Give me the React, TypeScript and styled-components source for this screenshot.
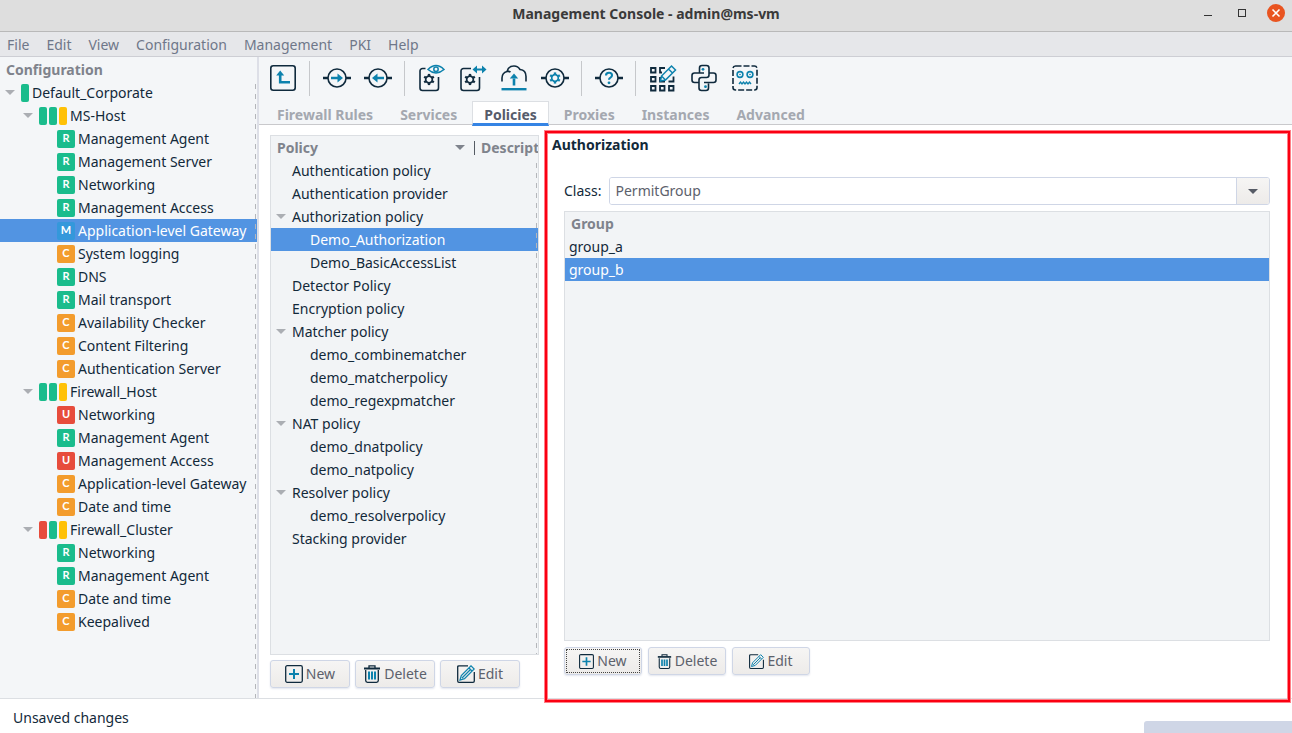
import React from 'react';
import styled, { createGlobalStyle } from 'styled-components';

const ink = '#0f2a3d';
const teal = '#0d82ad';

const GlobalStyle = createGlobalStyle`
  * { box-sizing: border-box; }
  body {
    margin: 0;
    background: #fff;
    color: #12293a;
    font-family: 'Noto Sans', 'Liberation Sans', sans-serif;
    font-size: 14px;
    line-height: 20px;
  }
  button, input { font: inherit; color: inherit; }
  ul { list-style: none; margin: 0; padding: 0; }
  h1, h2 { margin: 0; font-size: 14px; font-weight: 700; }
`;

const Window = styled.div`
  display: flex;
  flex-direction: column;
  min-height: 100vh;
`;

const TitleBar = styled.header`
  display: grid;
  grid-template-columns: 1fr auto 1fr;
  align-items: center;
  height: 32px;
  padding: 0 6px 4px;
  background: #dedede;
  border-bottom: 1px solid #b9b9b9;
  color: #3a3a3a;
`;

const WindowControls = styled.div`
  grid-column: 3;
  display: flex;
  justify-content: flex-end;
  gap: 14px;
`;

const WindowButton = styled.button`
  width: 20px;
  height: 20px;
  padding: 0;
  border: 0;
  background: none;
  svg { display: block; }
`;

const Title = styled.h1`
  grid-column: 2;
`;

const MenuBar = styled.nav`
  display: flex;
  align-items: center;
  gap: 17px;
  height: 25px;
  padding: 2px 7px 0;
  background: #e6e7ea;
  border-bottom: 1px solid #cdced4;
`;

const MenuItem = styled.button`
  padding: 0;
  border: 0;
  background: none;
  color: #6f7789;
`;

const Body = styled.div`
  flex: 1;
  display: flex;
`;

const Sidebar = styled.aside`
  flex: none;
  width: 259px;
  position: relative;
  background: #f4f6f8;
  border-right: 2px solid #dddfe7;
`;

const DashedEdge = styled.span`
  position: absolute;
  top: 27px;
  right: 1px;
  bottom: 0;
  width: 1px;
  background: repeating-linear-gradient(#b4b6ba 0 5px, transparent 5px 10px);
`;

const PaneHeader = styled.h2`
  height: 24px;
  padding: 3px 6px;
  color: #7f838c;
`;

const TreeRow = styled.li<{ $level: number; $selected?: boolean }>`
  display: flex;
  align-items: center;
  gap: 3px;
  height: 23px;
  padding-left: ${p => 5 + p.$level * 18}px;
  white-space: nowrap;
  background: ${p => (p.$selected ? '#5294e2' : 'transparent')};
  color: ${p => (p.$selected ? '#fff' : 'inherit')};
`;

const Twisty = styled.span<{ $open?: boolean }>`
  flex: none;
  width: 10px;
  margin-right: 3px;
  border: 5px solid transparent;
  border-bottom: 0;
  border-top-color: ${p => (p.$open ? '#abaeb3' : 'transparent')};
`;

const Bars = styled.span`
  display: flex;
  gap: 2px;
`;

const Bar = styled.span<{ $color: string }>`
  width: 8px;
  height: 18px;
  border-radius: 2px;
  background: ${p => p.$color};
`;

const Badge = styled.span<{ $color: string }>`
  width: 18px;
  height: 18px;
  border-radius: 2px;
  background: ${p => p.$color};
  color: #fff;
  font: 700 11px/16px Lato, sans-serif;
  text-align: center;
`;

const Main = styled.main`
  flex: 1;
  min-width: 0;
  display: flex;
  flex-direction: column;
`;

const Toolbar = styled.div`
  display: flex;
  align-items: center;
  height: 44px;
  padding: 0 3px 2px;
  background: #f4f6f8;
`;

const ToolButton = styled.button`
  display: grid;
  place-items: center;
  width: 41px;
  height: 36px;
  padding: 0;
  border: 0;
  background: none;
`;

const Separator = styled.span`
  width: 1px;
  height: 35px;
  margin: 0 6px;
  background: #c6c8cb;
`;

const Tabs = styled.div`
  display: flex;
  gap: 3px;
  height: 24px;
  padding-left: 6px;
  background: #f4f6f8;
  box-shadow: inset 0 -1px #c9c9cc;
`;

const Tab = styled.button<{ $active?: boolean }>`
  height: 25px;
  padding: ${p => (p.$active ? '3px' : '1px')} 11px 0;
  border: 1px solid ${p => (p.$active ? '#dcdfe3' : 'transparent')};
  border-bottom: ${p => (p.$active ? '3px solid #3584e4' : '0')};
  background: ${p => (p.$active ? '#fff' : 'none')};
  color: ${p => (p.$active ? '#565c6b' : '#a4a8b0')};
  font-weight: 700;
`;

const Content = styled.div`
  flex: 1;
  display: flex;
  padding-top: 1px;
`;

const PolicyPane = styled.section`
  flex: none;
  width: 285px;
  display: flex;
  flex-direction: column;
  gap: 5px;
  padding: 9px 5px 10px 11px;
`;

const ListBox = styled.div`
  flex: 1;
  position: relative;
  background: #f2f4f6;
  border: 1px solid #dcdfe3;
`;

const ColumnHeader = styled.div`
  display: flex;
  align-items: center;
  height: 23px;
  padding-left: 6px;
  overflow: hidden;
  color: #7f838c;
  font-weight: 700;
`;

const SortColumn = styled.span`
  flex: none;
  display: flex;
  align-items: center;
  justify-content: space-between;
  width: 198px;
  height: 14px;
  padding-right: 9px;
  margin-right: 6px;
  border-right: 1px solid #555b63;
`;

const SortArrow = styled.span`
  border: 5px solid transparent;
  border-bottom: 0;
  border-top-color: #7f838c;
`;

const ButtonRow = styled.div<{ $gap: number }>`
  display: flex;
  gap: ${p => p.$gap}px;
`;

const ActionButton = styled.button<{ $width: number; $focused?: boolean }>`
  display: flex;
  align-items: center;
  justify-content: center;
  gap: 3px;
  width: ${p => p.$width}px;
  height: 28px;
  padding: 0;
  border: 1px solid #cfd6e6;
  border-radius: 3px;
  background: linear-gradient(#f6f5f4, #edebe9);
  box-shadow: 0 1px 2px #e3e6ee;
  color: #5c616c;
  outline: ${p => (p.$focused ? '1px dotted #444' : 'none')};
  outline-offset: -3px;
`;

const DetailPane = styled.section`
  flex: 1;
  min-width: 0;
  position: relative;
  display: flex;
  flex-direction: column;
  padding: 9px 22px 23px 20px;
  &::after {
    content: '';
    position: absolute;
    inset: 5px 2px -4px 1px;
    border: 2px solid #fb0012;
    box-shadow: 0 0 0 1px #ff8088, inset 0 0 0 1px #ff8088;
    pointer-events: none;
  }
`;

const DetailTitle = styled.h2`
  margin: 0 0 22px -12px;
`;

const ClassRow = styled.div`
  display: flex;
  align-items: center;
  gap: 8px;
  margin-bottom: 6px;
`;

const Combo = styled.div`
  flex: 1;
  display: flex;
  height: 28px;
  border: 1px solid #cfd6e6;
  border-radius: 3px;
  overflow: hidden;
`;

const ComboInput = styled.input`
  flex: 1;
  min-width: 0;
  padding: 0 5px;
  border: 0;
  background: #fff;
  color: #5c616c;
`;

const ComboButton = styled.button`
  display: grid;
  place-items: center;
  width: 33px;
  padding: 0;
  border: 0;
  border-left: 1px solid #cfd6e6;
  background: linear-gradient(#f6f5f4, #edebe9);
`;

const ComboArrow = styled(SortArrow)`
  border-top-color: #565b66;
`;

const GroupList = styled(ListBox)`
  margin-bottom: 6px;
`;

const GroupRow = styled.li<{ $selected?: boolean }>`
  height: 23px;
  padding: 2px 4px 0;
  background: ${p => (p.$selected ? '#5294e2' : 'transparent')};
  color: ${p => (p.$selected ? '#fff' : 'inherit')};
`;

const StatusBar = styled.footer`
  display: flex;
  justify-content: space-between;
  height: 35px;
  padding: 9px 0 0 13px;
  border-top: 1px solid #dcdfe3;
`;

const Progress = styled.div`
  align-self: flex-end;
  width: 148px;
  height: 12px;
  border-top-left-radius: 3px;
  background: #cfd6e6;
`;

function Icon({ children }: { children: React.ReactNode }) {
  return (
    <svg width="28" height="28" viewBox="0 0 28 28" fill="none" stroke={ink} strokeWidth="1.6" aria-hidden="true">
      {children}
    </svg>
  );
}

const Gear = ({ x, y, color }: { x: number; y: number; color: string }) => (
  <g transform={`translate(${x} ${y})`} stroke={color}>
    <circle r="3.3" strokeWidth="1.7" />
    {[0, 60, 120, 180, 240, 300].map(a => (
      <path key={a} d="M0-3.600V-5.600" strokeWidth="2.400" transform={`rotate(${a})`} />
    ))}
  </g>
);

const Node = ({ children }: { children: React.ReactNode }) => (
  <Icon>
    <circle cx="14" cy="14" r="9" />
    <path d="M0 14h5M23 14h5" strokeWidth="2.6" />
    {children}
  </Icon>
);

const tools: Array<null | { name: string; icon: React.ReactNode }> = [
  {
    name: 'Up',
    icon: (
      <Icon>
        <rect x="1.8" y="1.8" width="24.4" height="24.4" rx="2.500" />
        <path d="M21 18.200H11.200V10" stroke={teal} strokeWidth="2.600" />
        <path d="M11.200 6.500l4 5H7.200z" fill={teal} stroke="none" />
      </Icon>
    ),
  },
  null,
  {
    name: 'Forward',
    icon: (
      <Node>
        <path d="M8 14h8" stroke={teal} strokeWidth="2.500" />
        <path d="M20 14l-5.500-4.400v8.800z" fill={teal} stroke="none" />
      </Node>
    ),
  },
  {
    name: 'Back',
    icon: (
      <Node>
        <path d="M20 14h-8" stroke={teal} strokeWidth="2.500" />
        <path d="M8 14l5.500-4.400v8.800z" fill={teal} stroke="none" />
      </Node>
    ),
  },
  null,
  {
    name: 'View configuration',
    icon: (
      <Icon>
        <path d="M7.500 4.500H4.500A2.500 2.500 0 0 0 2 7v17A2.500 2.500 0 0 0 4.500 26.500H18A2.500 2.500 0 0 0 20.500 24V13" />
        <Gear x={11} y={15.5} color={ink} />
        <path d="M10 5.500q8-8 16 0q-8 7-16 0z" stroke={teal} strokeWidth="1.500" />
        <circle cx="18" cy="5.300" r="2.200" stroke={teal} strokeWidth="1.500" />
      </Icon>
    ),
  },
  {
    name: 'Compare configuration',
    icon: (
      <Icon>
        <path d="M12 4.500H4.500A2.500 2.500 0 0 0 2 7v17A2.500 2.500 0 0 0 4.500 26.500H18A2.500 2.500 0 0 0 20.500 24V13" />
        <Gear x={11} y={15.5} color={ink} />
        <path d="M16 5.500h9" stroke={teal} strokeWidth="2" />
        <path d="M13.500 5.500l4.500-4v8zM27.500 5.500l-4.500-4v8z" fill={teal} stroke="none" />
      </Icon>
    ),
  },
  {
    name: 'Upload configuration',
    icon: (
      <Icon>
        <path d="M2 17.500V14q0-5 5-6.500q1.500-5.500 7-5.500q4 0 6 3.500q6 .5 6 7V17.500M7 7.500q2-.500 3.500.500" />
        <path d="M14 21.500v-7" stroke={teal} strokeWidth="2.600" />
        <path d="M14 9.500l4.200 5H9.800z" fill={teal} stroke="none" />
        <path d="M1.500 25.200h25" stroke={teal} strokeWidth="2.400" />
      </Icon>
    ),
  },
  { name: 'Control service', icon: <Node><Gear x={14} y={14} color={teal} /></Node> },
  null,
  {
    name: 'Check',
    icon: (
      <Node>
        <path d="M11 11.500q0-2.700 3-2.700t3 2.500q0 1.500-1.500 2.300T14 15.800" stroke={teal} strokeWidth="2.100" />
        <circle cx="14" cy="18.800" r="1.400" fill={teal} stroke="none" />
      </Node>
    ),
  },
  null,
  {
    name: 'Edit grid',
    icon: (
      <Icon>
        <path
          strokeWidth="1.800"
          d="M2 4h4.500v4.500H2zM2 13h4.500v4.500H2zM2 22h4.500v4.500H2zM11 22h4.500v4.500H11zM20 22h4.500v4.500H20zM16 4h-5v4.500h2M11 13v4.500h5M19.500 17.500h5V12.500"
        />
        <path
          d="M11.500 17l1-5L22.500 2l4 4L16.500 16zM19.500 5l4 4M12.500 12l4 4"
          fill="#f4f6f8"
          stroke={teal}
          strokeWidth="1.500"
        />
      </Icon>
    ),
  },
  {
    name: 'Python',
    icon: (
      <Icon>
        <path d="M9.500 8.500V4q0-2.500 2.500-2.500h4.500Q19 1.500 19 4v7q0 2.500-2.500 2.500h-5Q9 13.500 9 16v2.500H4.500Q2 18.500 2 16v-4.500Q2 9 4.500 9H14M18.500 19.500V24q0 2.500-2.500 2.500h-4.500Q9 26.500 9 24v-5.500M19 9h4.500Q26 9 26 11.500V16q0 2.500-2.500 2.500H14" />
        <circle cx="13" cy="5.300" r="1.400" fill={teal} stroke="none" />
        <circle cx="15.500" cy="22.700" r="1.400" fill={teal} stroke="none" />
      </Icon>
    ),
  },
  {
    name: 'Script preview',
    icon: (
      <Icon>
        <rect x="2" y="2" width="24" height="24" rx="2.500" strokeDasharray="6 2" />
        <g stroke={teal}>
          <circle cx="9" cy="10.500" r="2.900" />
          <circle cx="19" cy="10.500" r="2.900" />
          <path d="M8 20l1.500-2 1.500 2 1.500-2 1.500 2 1.500-2 1.500 2 1.500-2 1.500 2" strokeWidth="1.300" />
        </g>
        <circle cx="9" cy="10.500" r=".8" fill={teal} stroke="none" />
        <circle cx="19" cy="10.500" r=".8" fill={teal} stroke="none" />
      </Icon>
    ),
  },
];

const colors = { g: '#1abc8c', y: '#ffc107', r: '#e74c3c' };
const badgeColors: Record<string, string> = { R: '#1abc8c', U: '#e74c3c', C: '#f39c2d', M: '#3498db' };

type Host = { name: string; bars: Array<keyof typeof colors>; items: string[][] };

const hosts: Host[] = [
  {
    name: 'MS-Host',
    bars: ['g', 'g', 'y'],
    items: [
      ['R', 'Management Agent'],
      ['R', 'Management Server'],
      ['R', 'Networking'],
      ['R', 'Management Access'],
      ['M', 'Application-level Gateway'],
      ['C', 'System logging'],
      ['R', 'DNS'],
      ['R', 'Mail transport'],
      ['C', 'Availability Checker'],
      ['C', 'Content Filtering'],
      ['C', 'Authentication Server'],
    ],
  },
  {
    name: 'Firewall_Host',
    bars: ['g', 'g', 'y'],
    items: [
      ['U', 'Networking'],
      ['R', 'Management Agent'],
      ['U', 'Management Access'],
      ['C', 'Application-level Gateway'],
      ['C', 'Date and time'],
    ],
  },
  {
    name: 'Firewall_Cluster',
    bars: ['r', 'g', 'y'],
    items: [
      ['R', 'Networking'],
      ['R', 'Management Agent'],
      ['C', 'Date and time'],
      ['C', 'Keepalived'],
    ],
  },
];

const policies: Array<{ name: string; items?: string[] }> = [
  { name: 'Authentication policy' },
  { name: 'Authentication provider' },
  { name: 'Authorization policy', items: ['Demo_Authorization', 'Demo_BasicAccessList'] },
  { name: 'Detector Policy' },
  { name: 'Encryption policy' },
  { name: 'Matcher policy', items: ['demo_combinematcher', 'demo_matcherpolicy', 'demo_regexpmatcher'] },
  { name: 'NAT policy', items: ['demo_dnatpolicy', 'demo_natpolicy'] },
  { name: 'Resolver policy', items: ['demo_resolverpolicy'] },
  { name: 'Stacking provider' },
];

function Actions({ width, gap, iconSize, focused }: { width: number; gap: number; iconSize: number; focused?: boolean }) {
  const svg = { width: iconSize, height: iconSize, viewBox: '0 0 18 18', fill: 'none', stroke: ink, strokeWidth: 1.3 };
  return (
    <ButtonRow $gap={gap}>
      <ActionButton $width={width} $focused={focused}>
        <svg {...svg}>
          <rect x=".7" y=".7" width="16.600" height="16.600" rx="1.500" />
          <path d="M9 4v10M4 9h10" stroke={teal} strokeWidth="2" />
        </svg>
        New
      </ActionButton>
      <ActionButton $width={width}>
        <svg {...svg}>
          <path d="M6 3V.8h6V3M2.700 5v10.500q0 1.800 1.800 1.800h9q1.800 0 1.800-1.800V5" />
          <path d="M1 3.500h16" strokeWidth="2" />
          <path d="M6 6.500v8M9 6.500v8M12 6.500v8" stroke={teal} strokeWidth="2" />
        </svg>
        Delete
      </ActionButton>
      <ActionButton $width={width}>
        <svg {...svg}>
          <path d="M11 .8H2Q.7.800.7 2v14q0 1.300 1.300 1.300h14q1.300 0 1.300-1.300V7" />
          <path d="M3 15l1.300-4.500L14 .8 17.200 4 7.500 13.700zM12 3l3 3M5 13L13.500 4.500" stroke={teal} strokeWidth="1.200" />
        </svg>
        Edit
      </ActionButton>
    </ButtonRow>
  );
}

export default function App() {
  return (
    <Window>
      <GlobalStyle />
      <TitleBar>
        <Title>Management Console - admin@ms-vm</Title>
        <WindowControls>
          <WindowButton aria-label="Minimize">
            <svg width="20" height="20"><path d="M6 11.500h8" stroke="#333" /></svg>
          </WindowButton>
          <WindowButton aria-label="Maximize">
            <svg width="20" height="20"><rect x="6.500" y="5.500" width="7" height="7" fill="none" stroke="#333" /></svg>
          </WindowButton>
          <WindowButton aria-label="Close">
            <svg width="20" height="20">
              <circle cx="10" cy="9" r="9" fill="#e95420" />
              <path d="M6.500 5.500l7 7M13.500 5.500l-7 7" stroke="#fff" strokeWidth="1.600" />
            </svg>
          </WindowButton>
        </WindowControls>
      </TitleBar>
      <MenuBar>
        {['File', 'Edit', 'View', 'Configuration', 'Management', 'PKI', 'Help'].map(m => (
          <MenuItem key={m}>{m}</MenuItem>
        ))}
      </MenuBar>
      <Body>
        <Sidebar>
          <PaneHeader>Configuration</PaneHeader>
          <ul>
            <TreeRow $level={0}>
              <Twisty $open />
              <Bar $color={colors.g} />
              Default_Corporate
            </TreeRow>
            {hosts.map(h => (
              <React.Fragment key={h.name}>
                <TreeRow $level={1}>
                  <Twisty $open />
                  <Bars>{h.bars.map((b, i) => <Bar key={i} $color={colors[b]} />)}</Bars>
                  {h.name}
                </TreeRow>
                {h.items.map(([kind, name]) => (
                  <TreeRow key={name} $level={2} $selected={kind === 'M'}>
                    <Twisty />
                    <Badge $color={badgeColors[kind]}>{kind}</Badge>
                    {name}
                  </TreeRow>
                ))}
              </React.Fragment>
            ))}
          </ul>
          <DashedEdge />
        </Sidebar>
        <Main>
          <Toolbar>
            {tools.map((t, i) =>
              t ? <ToolButton key={i} aria-label={t.name}>{t.icon}</ToolButton> : <Separator key={i} />
            )}
          </Toolbar>
          <Tabs>
            {['Firewall Rules', 'Services', 'Policies', 'Proxies', 'Instances', 'Advanced'].map(t => (
              <Tab key={t} $active={t === 'Policies'}>{t}</Tab>
            ))}
          </Tabs>
          <Content>
            <PolicyPane>
              <ListBox>
                <ColumnHeader>
                  <SortColumn>Policy<SortArrow /></SortColumn>
                  Descript
                </ColumnHeader>
                <ul>
                  {policies.map(p => (
                    <React.Fragment key={p.name}>
                      <TreeRow $level={0}>
                        <Twisty $open={!!p.items} />
                        {p.name}
                      </TreeRow>
                      {p.items?.map(name => (
                        <TreeRow key={name} $level={1} $selected={name === 'Demo_Authorization'}>
                          <Twisty />
                          {name}
                        </TreeRow>
                      ))}
                    </React.Fragment>
                  ))}
                </ul>
                <DashedEdge />
              </ListBox>
              <Actions width={80} gap={5} iconSize={18} />
            </PolicyPane>
            <DetailPane>
              <DetailTitle>Authorization</DetailTitle>
              <ClassRow>
                <label htmlFor="class">Class:</label>
                <Combo>
                  <ComboInput id="class" defaultValue="PermitGroup" />
                  <ComboButton aria-label="Show classes"><ComboArrow /></ComboButton>
                </Combo>
              </ClassRow>
              <GroupList>
                <ColumnHeader>Group</ColumnHeader>
                <ul>
                  <GroupRow>group_a</GroupRow>
                  <GroupRow $selected>group_b</GroupRow>
                </ul>
              </GroupList>
              <Actions width={78} gap={6} iconSize={15} focused />
            </DetailPane>
          </Content>
        </Main>
      </Body>
      <StatusBar>
        Unsaved changes
        <Progress />
      </StatusBar>
    </Window>
  );
}
